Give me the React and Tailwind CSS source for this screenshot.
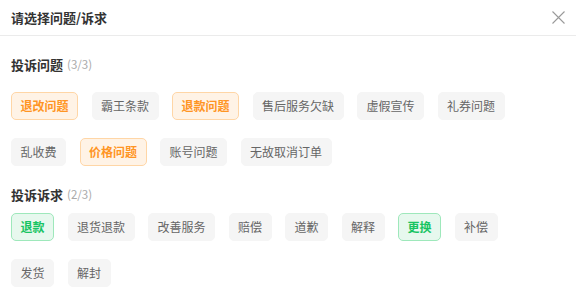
const font = { fontFamily: '"Noto Sans CJK SC", "Noto Sans", sans-serif' };

const problems = [
  { label: "退改问题", active: true },
  { label: "霸王条款" },
  { label: "退款问题", active: true },
  { label: "售后服务欠缺" },
  { label: "虚假宣传" },
  { label: "礼券问题" },
  { label: "乱收费" },
  { label: "价格问题", active: true },
  { label: "账号问题" },
  { label: "无故取消订单" },
];

const demands = [
  { label: "退款", active: true },
  { label: "退货退款" },
  { label: "改善服务" },
  { label: "赔偿" },
  { label: "道歉" },
  { label: "解释" },
  { label: "更换", active: true },
  { label: "补偿" },
  { label: "发货" },
  { label: "解封" },
];

function Tag({ label, active, tone }) {
  let cls = "border-[#f5f5f5] bg-[#f5f5f5] text-[#666]";
  if (active && tone === "orange") cls = "border-[#ffd6a6] bg-[#fff3e6] text-[#ff9524] font-bold";
  if (active && tone === "green") cls = "border-[#9ee8bb] bg-[#e7f8ee] text-[#18c463] font-bold";
  return (
    <span
      className={`flex h-[28px] items-center rounded-[5px] border px-[8.5px] text-[12px] leading-none ${cls}`}
    >
      {label}
    </span>
  );
}

function CloseIcon() {
  return (
    <svg width="13" height="13" viewBox="0 0 13 13" fill="none" stroke="#9a9a9a" strokeWidth="1.1">
      <path d="M0.5 0.5L12.5 12.5M12.5 0.5L0.5 12.5" />
    </svg>
  );
}

export default function App() {
  return (
    <div className="h-[302px] w-[576px] overflow-hidden bg-white" style={font}>
      <div className="flex h-[36px] items-center justify-between border-b border-[#ebebeb] pl-[11px] pr-[11px]">
        <h1 className="text-[13px] font-bold text-[#333]">请选择问题/诉求</h1>
        <button type="button" aria-label="close" className="mt-[-1px]">
          <CloseIcon />
        </button>
      </div>

      <div className="px-[11px] pt-[19px]">
        <div className="flex h-[20px] items-center gap-[4px] text-[13px] font-bold text-[#333]">
          投诉问题 <span className="text-[11.5px] font-normal text-[#aaa]">(3/3)</span>
        </div>
        <div className="mt-[17px] flex flex-wrap gap-x-[13.5px] gap-y-[18px]">
          {problems.map((p) => (
            <Tag key={p.label} {...p} tone="orange" />
          ))}
        </div>

        <div className="mt-[19px] flex h-[20px] items-center gap-[4px] text-[13px] font-bold text-[#333]">
          投诉诉求 <span className="text-[11.5px] font-normal text-[#aaa]">(2/3)</span>
        </div>
        <div className="mt-[8px] flex flex-wrap gap-x-[13.5px] gap-y-[18px] pr-[60px]">
          {demands.map((d) => (
            <Tag key={d.label} {...d} tone="green" />
          ))}
        </div>
      </div>
    </div>
  );
}
